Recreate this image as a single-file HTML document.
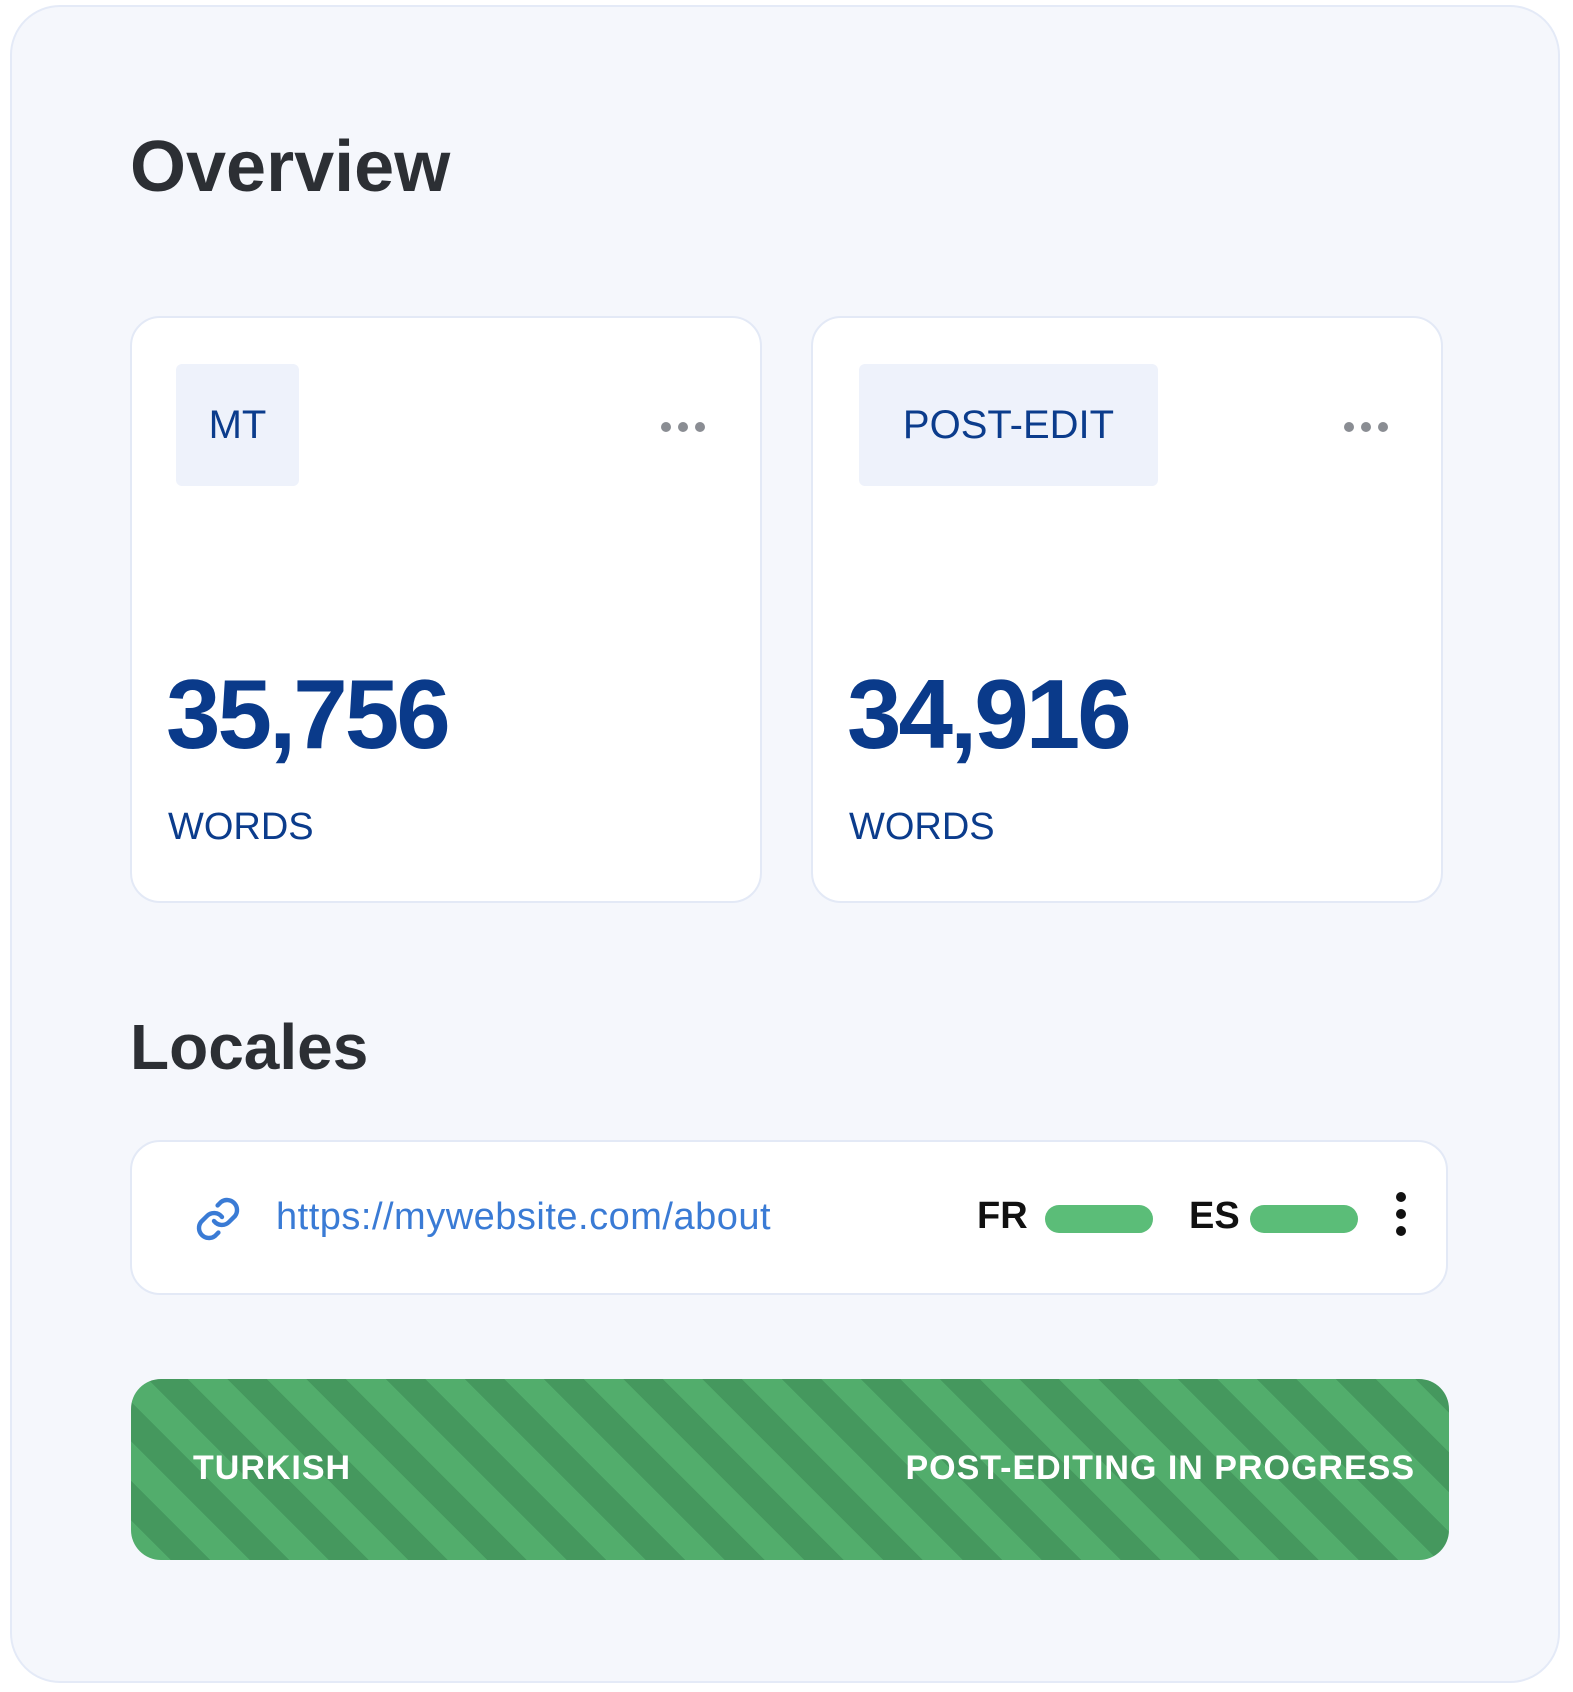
<!DOCTYPE html>
<html><head><style>
body{margin:0;width:1573px;height:1692px;background:#fff;font-family:"Liberation Sans",sans-serif;position:relative;overflow:hidden}
.outer{position:absolute;left:10px;top:5px;width:1550px;height:1678px;background:#f5f7fc;border:2px solid #e4eaf7;border-radius:50px;box-sizing:border-box}
.h{position:absolute;color:#2c2f34;font-weight:bold}
.card{position:absolute;top:316px;width:632px;height:587px;background:#fff;border:2px solid #e3e9f6;border-radius:30px;box-sizing:border-box}
.tag{position:absolute;left:44px;top:46px;height:122px;background:#eef2fb;border-radius:6px;color:#0b3c8c;font-size:40px;line-height:122px;text-align:center}
.dots{position:absolute;top:104px;display:flex;gap:7px}
.dots i{width:10px;height:10px;border-radius:50%;background:#8a8d93;display:block}
.num{position:absolute;left:34px;top:340px;font-size:98px;font-weight:bold;color:#0a3a8a;letter-spacing:-3px}
.words{position:absolute;left:36px;top:488px;font-size:38px;color:#0b3c8c}
.row{position:absolute;left:130px;top:1140px;width:1318px;height:155px;background:#fff;border:2px solid #e3e9f6;border-radius:30px;box-sizing:border-box}
.pill{position:absolute;top:63px;width:108px;height:28px;border-radius:14px;background:#5bbd78}
.lab{position:absolute;top:53px;font-size:38px;font-weight:bold;color:#111}
.bar{position:absolute;left:131px;top:1379px;width:1318px;height:181px;border-radius:30px;background:repeating-linear-gradient(45deg,#52ad6c 0 28px,#45985e 28px 56px);color:#fff;font-weight:bold;font-size:34px;letter-spacing:1px}
</style></head><body>
<div class="outer"></div>
<div class="h" style="left:130px;top:126px;font-size:72px">Overview</div>
<div class="card" style="left:130px">
 <div class="tag" style="width:123px">MT</div>
 <div class="dots" style="left:529px"><i></i><i></i><i></i></div>
 <div class="num">35,756</div>
 <div class="words">WORDS</div>
</div>
<div class="card" style="left:811px">
 <div class="tag" style="left:46px;width:299px">POST-EDIT</div>
 <div class="dots" style="left:531px"><i></i><i></i><i></i></div>
 <div class="num">34,916</div>
 <div class="words">WORDS</div>
</div>
<div class="h" style="left:130px;top:1010px;font-size:64px">Locales</div>
<div class="row">
 <svg style="position:absolute;left:62px;top:53px" width="48" height="48" viewBox="0 0 24 24" fill="none" stroke="#3a7bd5" stroke-width="2.2" stroke-linecap="round"><path d="M10 13a5 5 0 0 0 7.5.5l3-3a5 5 0 0 0-7-7l-1.7 1.7"/><path d="M14 11a5 5 0 0 0-7.5-.5l-3 3a5 5 0 0 0 7 7l1.7-1.7"/></svg>
 <div style="position:absolute;left:144px;top:54px;font-size:38px;letter-spacing:0.5px;color:#3a7bd5">https://mywebsite.com/about</div>
 <div class="lab" style="left:845px">FR</div>
 <div class="pill" style="left:913px"></div>
 <div class="lab" style="left:1057px">ES</div>
 <div class="pill" style="left:1118px"></div>
 <div style="position:absolute;left:1264px;top:50px;display:flex;flex-direction:column;gap:7px"><i style="width:10px;height:10px;border-radius:50%;background:#111;display:block"></i><i style="width:10px;height:10px;border-radius:50%;background:#111;display:block"></i><i style="width:10px;height:10px;border-radius:50%;background:#111;display:block"></i></div>
</div>
<div class="bar">
 <div style="position:absolute;left:62px;top:70px">TURKISH</div>
 <div style="position:absolute;right:34px;top:70px">POST-EDITING IN PROGRESS</div>
</div>
</body></html>
